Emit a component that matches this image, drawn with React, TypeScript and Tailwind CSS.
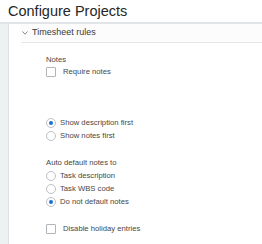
import React from "react";

function Checkbox({ label }: { label: string }) {
  return (
    <div className="flex items-center h-[13px]">
      <span className="w-[10px] h-[10px] border border-[#b0b5b9] rounded-[1px] bg-white shrink-0" />
      <span className="ml-[7px] text-[7.7px] leading-[13px] text-[#474747]">{label}</span>
    </div>
  );
}

function Radio({ label, checked }: { label: string; checked?: boolean }) {
  return (
    <div className="flex items-center h-[13px]">
      <span className="w-[10px] h-[10px] rounded-full border border-[#bcc1c5] bg-white flex items-center justify-center shrink-0">
        {checked && <span className="w-[4px] h-[4px] rounded-full bg-[#1a6fd0]" />}
      </span>
      <span className="ml-[4px] text-[7.7px] leading-[13px] text-[#474747]">{label}</span>
    </div>
  );
}

export default function App() {
  return (
    <main className="w-[262px] h-[244px] overflow-hidden bg-white flex flex-col font-['Liberation_Sans',Arial,sans-serif]">
      <h1 className="h-[22px] pl-[8px] text-[14.5px] leading-[22px] text-[#262626]">Configure Projects</h1>
      <div className="flex flex-1 border-t-2 border-[#e2e5e7]">
        <div className="w-[9px] bg-[#eef1f2] border-r border-[#dde1e4]" />
        <section className="flex-1 bg-white">
          <header className="ml-[12px] h-[19px] flex items-center border-b border-[#e4e6e8] bg-[#fcfcfc]">
            <svg width="6" height="4" viewBox="0 0 6 4" className="ml-[1px]">
              <path d="M0.5 0.5 L3 3.2 L5.5 0.5" fill="none" stroke="#777b7f" strokeWidth="0.9" />
            </svg>
            <span className="ml-[4px] text-[9px] text-[#3a3a3a]">Timesheet rules</span>
          </header>
          <div className="pl-[37px] pt-[11px] flex flex-col">
            <div className="h-[12px] text-[7.7px] leading-[12px] text-[#474747]">Notes</div>
            <div className="-mt-[1px]">
              <Checkbox label="Require notes" />
            </div>
            <div className="mt-[38px]">
              <Radio label="Show description first" checked />
              <Radio label="Show notes first" />
            </div>
            <div className="mt-[15px] h-[12px] text-[7.7px] leading-[12px] text-[#474747]">Auto default notes to</div>
            <div>
              <Radio label="Task description" />
              <Radio label="Task WBS code" />
              <Radio label="Do not default notes" checked />
            </div>
            <div className="mt-[14px]">
              <Checkbox label="Disable holiday entries" />
            </div>
          </div>
        </section>
      </div>
    </main>
  );
}
